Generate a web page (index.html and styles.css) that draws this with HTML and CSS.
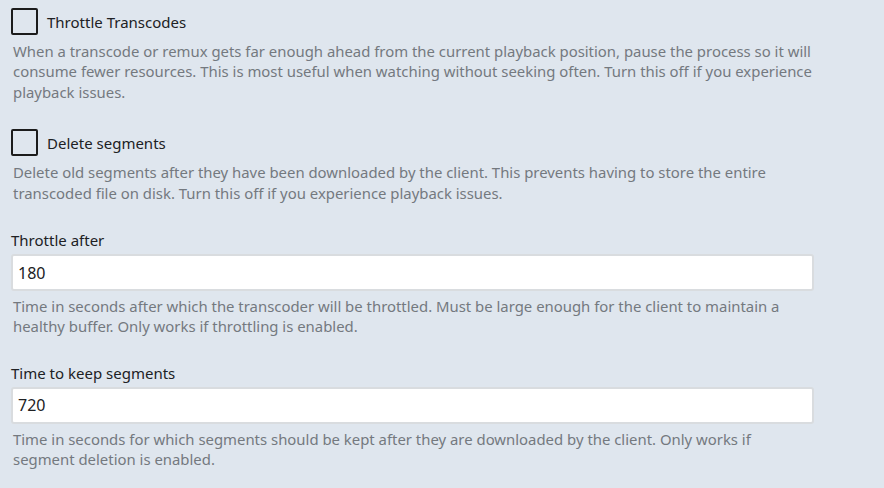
FILE: index.html
```html
<!DOCTYPE html>
<html lang="en">
<head>
    <meta charset="UTF-8">
    <title>Transcoding</title>
    <link rel="stylesheet" href="styles.css">
</head>
<body>
    <div class="settings">
        <div class="check-field">
            <label class="check-row">
                <span class="check-box"></span>
                <span class="check-label">Throttle Transcodes</span>
            </label>
            <div class="field-description">When a transcode or remux gets far enough ahead from the current playback position, pause the process so it will consume fewer resources. This is most useful when watching without seeking often. Turn this off if you experience playback issues.</div>
        </div>

        <div class="check-field">
            <label class="check-row">
                <span class="check-box"></span>
                <span class="check-label">Delete segments</span>
            </label>
            <div class="field-description">Delete old segments after they have been downloaded by the client. This prevents having to store the entire transcoded file on disk. Turn this off if you experience playback issues.</div>
        </div>

        <div class="input-field">
            <label class="input-label" for="throttleAfter">Throttle after</label>
            <input class="text-input" id="throttleAfter" type="text" value="180">
            <div class="field-description">Time in seconds after which the transcoder will be throttled. Must be large enough for the client to maintain a healthy buffer. Only works if throttling is enabled.</div>
        </div>

        <div class="input-field">
            <label class="input-label" for="keepSegments">Time to keep segments</label>
            <input class="text-input" id="keepSegments" type="text" value="720">
            <div class="field-description">Time in seconds for which segments should be kept after they are downloaded by the client. Only works if segment deletion is enabled.</div>
        </div>
    </div>
</body>
</html>
```

FILE: styles.css
```css
body {
    margin: 0;
    background: #dfe6ee;
    font-family: "Noto Sans", "Open Sans", sans-serif;
    color: #202124;
}
.settings {
    width: 803px;
    padding: 8px 0 0 11px;
}
.check-field {
    margin-bottom: 27px;
}
.check-row {
    display: flex;
    align-items: center;
    gap: 9px;
}
.check-box {
    width: 23px;
    height: 23px;
    border: 2px solid #1c1c1c;
    border-radius: 2px;
}
.check-label {
    font-size: 15px;
}
.field-description {
    margin-top: 6px;
    padding-left: 2px;
    font-size: 14.9px;
    line-height: 20.4px;
    color: #74797f;
}
.input-field {
    margin-bottom: 26px;
}
.input-label {
    display: block;
    font-size: 15px;
    line-height: 20px;
    margin-bottom: 4px;
}
.text-input {
    display: block;
    box-sizing: border-box;
    width: 100%;
    height: 37px;
    margin: 0;
    padding: 0 5px;
    border: 2px solid #d9dcdf;
    border-radius: 3px;
    background: #fff;
    font-family: inherit;
    font-size: 16px;
    color: #202124;
}
.text-input + .field-description {
    margin-top: 5px;
}
```
